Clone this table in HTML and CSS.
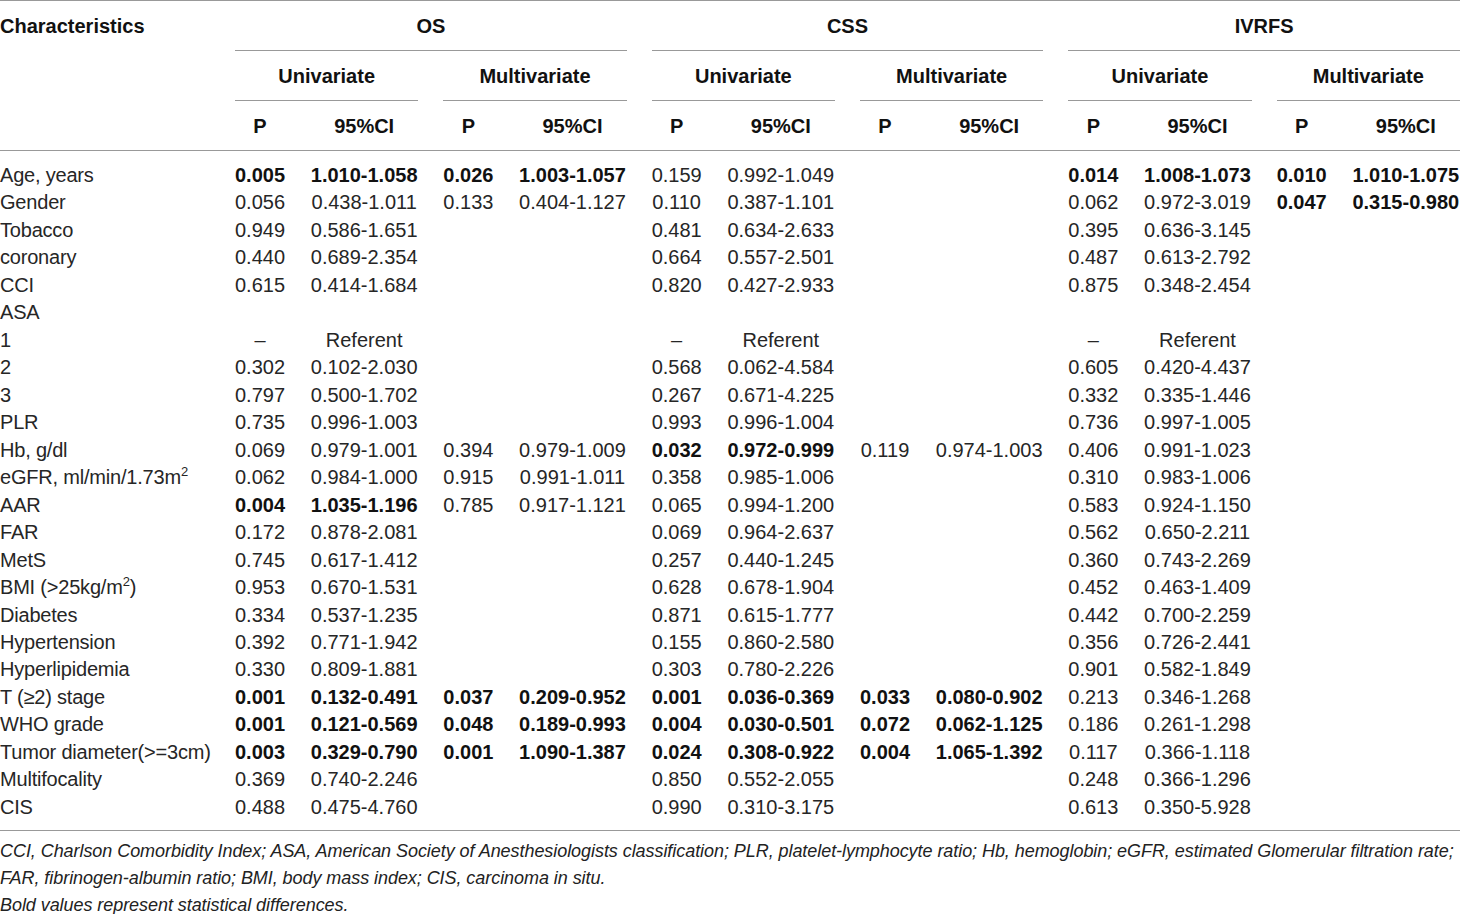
FILE: index.html
```html
<!DOCTYPE html>
<html lang="en">
<head>
    <meta charset="UTF-8">
    <title>Cox regression analysis</title>
    <link rel="stylesheet" href="styles.css">
</head>
<body>

    <div class="rule"></div>

    <!-- Header: outcome / model / column names -->
    <div class="grid head">
        <div class="cell label strong">Characteristics</div>
        <div class="cell span4 strong underline">OS</div>
        <div class="cell span4 strong underline">CSS</div>
        <div class="cell span4 strong underline">IVRFS</div>

        <div class="cell label"></div>
        <div class="cell span2 strong underline">Univariate</div>
        <div class="cell span2 strong underline">Multivariate</div>
        <div class="cell span2 strong underline">Univariate</div>
        <div class="cell span2 strong underline">Multivariate</div>
        <div class="cell span2 strong underline">Univariate</div>
        <div class="cell span2 strong underline">Multivariate</div>

        <div class="cell label"></div>
        <div class="cell strong">P</div><div class="cell strong">95%CI</div>
        <div class="cell strong">P</div><div class="cell strong">95%CI</div>
        <div class="cell strong">P</div><div class="cell strong">95%CI</div>
        <div class="cell strong">P</div><div class="cell strong">95%CI</div>
        <div class="cell strong">P</div><div class="cell strong">95%CI</div>
        <div class="cell strong">P</div><div class="cell strong">95%CI</div>
    </div>

    <div class="rule"></div>

    <div class="grid body" id="rows"></div>

    <div class="rule"></div>

    <div class="notes">
        <p>CCI, Charlson Comorbidity Index; ASA, American Society of Anesthesiologists classification; PLR, platelet-lymphocyte ratio; Hb, hemoglobin; eGFR, estimated Glomerular filtration rate;</p>
        <p>FAR, fibrinogen-albumin ratio; BMI, body mass index; CIS, carcinoma in situ.</p>
        <p>Bold values represent statistical differences.</p>
    </div>

    <script>
        // label, then 12 cells; a leading "*" marks a bold value
        const data = [
            ["Age, years", "*0.005", "*1.010-1.058", "*0.026", "*1.003-1.057", "0.159", "0.992-1.049", "", "", "*0.014", "*1.008-1.073", "*0.010", "*1.010-1.075"],
            ["Gender", "0.056", "0.438-1.011", "0.133", "0.404-1.127", "0.110", "0.387-1.101", "", "", "0.062", "0.972-3.019", "*0.047", "*0.315-0.980"],
            ["Tobacco", "0.949", "0.586-1.651", "", "", "0.481", "0.634-2.633", "", "", "0.395", "0.636-3.145", "", ""],
            ["coronary", "0.440", "0.689-2.354", "", "", "0.664", "0.557-2.501", "", "", "0.487", "0.613-2.792", "", ""],
            ["CCI", "0.615", "0.414-1.684", "", "", "0.820", "0.427-2.933", "", "", "0.875", "0.348-2.454", "", ""],
            ["ASA", "", "", "", "", "", "", "", "", "", "", "", ""],
            ["1", "–", "Referent", "", "", "–", "Referent", "", "", "–", "Referent", "", ""],
            ["2", "0.302", "0.102-2.030", "", "", "0.568", "0.062-4.584", "", "", "0.605", "0.420-4.437", "", ""],
            ["3", "0.797", "0.500-1.702", "", "", "0.267", "0.671-4.225", "", "", "0.332", "0.335-1.446", "", ""],
            ["PLR", "0.735", "0.996-1.003", "", "", "0.993", "0.996-1.004", "", "", "0.736", "0.997-1.005", "", ""],
            ["Hb, g/dl", "0.069", "0.979-1.001", "0.394", "0.979-1.009", "*0.032", "*0.972-0.999", "0.119", "0.974-1.003", "0.406", "0.991-1.023", "", ""],
            ["eGFR, ml/min/1.73m<sup>2</sup>", "0.062", "0.984-1.000", "0.915", "0.991-1.011", "0.358", "0.985-1.006", "", "", "0.310", "0.983-1.006", "", ""],
            ["AAR", "*0.004", "*1.035-1.196", "0.785", "0.917-1.121", "0.065", "0.994-1.200", "", "", "0.583", "0.924-1.150", "", ""],
            ["FAR", "0.172", "0.878-2.081", "", "", "0.069", "0.964-2.637", "", "", "0.562", "0.650-2.211", "", ""],
            ["MetS", "0.745", "0.617-1.412", "", "", "0.257", "0.440-1.245", "", "", "0.360", "0.743-2.269", "", ""],
            ["BMI (&gt;25kg/m<sup>2</sup>)", "0.953", "0.670-1.531", "", "", "0.628", "0.678-1.904", "", "", "0.452", "0.463-1.409", "", ""],
            ["Diabetes", "0.334", "0.537-1.235", "", "", "0.871", "0.615-1.777", "", "", "0.442", "0.700-2.259", "", ""],
            ["Hypertension", "0.392", "0.771-1.942", "", "", "0.155", "0.860-2.580", "", "", "0.356", "0.726-2.441", "", ""],
            ["Hyperlipidemia", "0.330", "0.809-1.881", "", "", "0.303", "0.780-2.226", "", "", "0.901", "0.582-1.849", "", ""],
            ["T (≥2) stage", "*0.001", "*0.132-0.491", "*0.037", "*0.209-0.952", "*0.001", "*0.036-0.369", "*0.033", "*0.080-0.902", "0.213", "0.346-1.268", "", ""],
            ["WHO grade", "*0.001", "*0.121-0.569", "*0.048", "*0.189-0.993", "*0.004", "*0.030-0.501", "*0.072", "*0.062-1.125", "0.186", "0.261-1.298", "", ""],
            ["Tumor diameter(&gt;=3cm)", "*0.003", "*0.329-0.790", "*0.001", "*1.090-1.387", "*0.024", "*0.308-0.922", "*0.004", "*1.065-1.392", "0.117", "0.366-1.118", "", ""],
            ["Multifocality", "0.369", "0.740-2.246", "", "", "0.850", "0.552-2.055", "", "", "0.248", "0.366-1.296", "", ""],
            ["CIS", "0.488", "0.475-4.760", "", "", "0.990", "0.310-3.175", "", "", "0.613", "0.350-5.928", "", ""]
        ];

        const rows = document.getElementById("rows");
        let html = "";
        data.forEach(row => {
            html += `<div class="cell label">${row[0]}</div>`;
            row.slice(1).forEach(v => {
                if (v.startsWith("*")) {
                    html += `<div class="cell strong">${v.slice(1)}</div>`;
                } else {
                    html += `<div class="cell">${v}</div>`;
                }
            });
        });
        rows.innerHTML = html;
    </script>

</body>
</html>
```

FILE: styles.css
```css
body {
    margin: 0;
    width: 1460px;
    font-family: "Liberation Sans", Arial, sans-serif;
    font-size: 20px;
    color: #262626;
    background: #fff;
}

.rule {
    height: 1px;
    background: #999;
}

.grid {
    display: grid;
    grid-template-columns: 210px repeat(6, 50px 108.33px);
    column-gap: 25px;
}

.cell {
    text-align: center;
    white-space: nowrap;
}

.cell.label {
    text-align: left;
    letter-spacing: -0.2px;
}

.strong {
    font-weight: bold;
    color: #111;
}

.span2 {
    grid-column: span 2;
}

.span4 {
    grid-column: span 4;
}

/* Header rows */
.head .cell {
    height: 49px;
    line-height: 51px;
    letter-spacing: 0;
}

.head .underline {
    border-bottom: 1px solid #999;
}

/* Data rows */
.body {
    padding: 11px 0 9px;
    grid-auto-rows: 27.48px;
}

.body .cell {
    line-height: 27.48px;
}

sup {
    font-size: 13px;
    line-height: 0;
}

/* Notes under the table */
.notes {
    padding-top: 7px;
    font-style: italic;
    font-size: 18px;
    color: #222;
}

.notes p {
    margin: 0;
    line-height: 27px;
    white-space: nowrap;
    letter-spacing: -0.06px;
}
```
